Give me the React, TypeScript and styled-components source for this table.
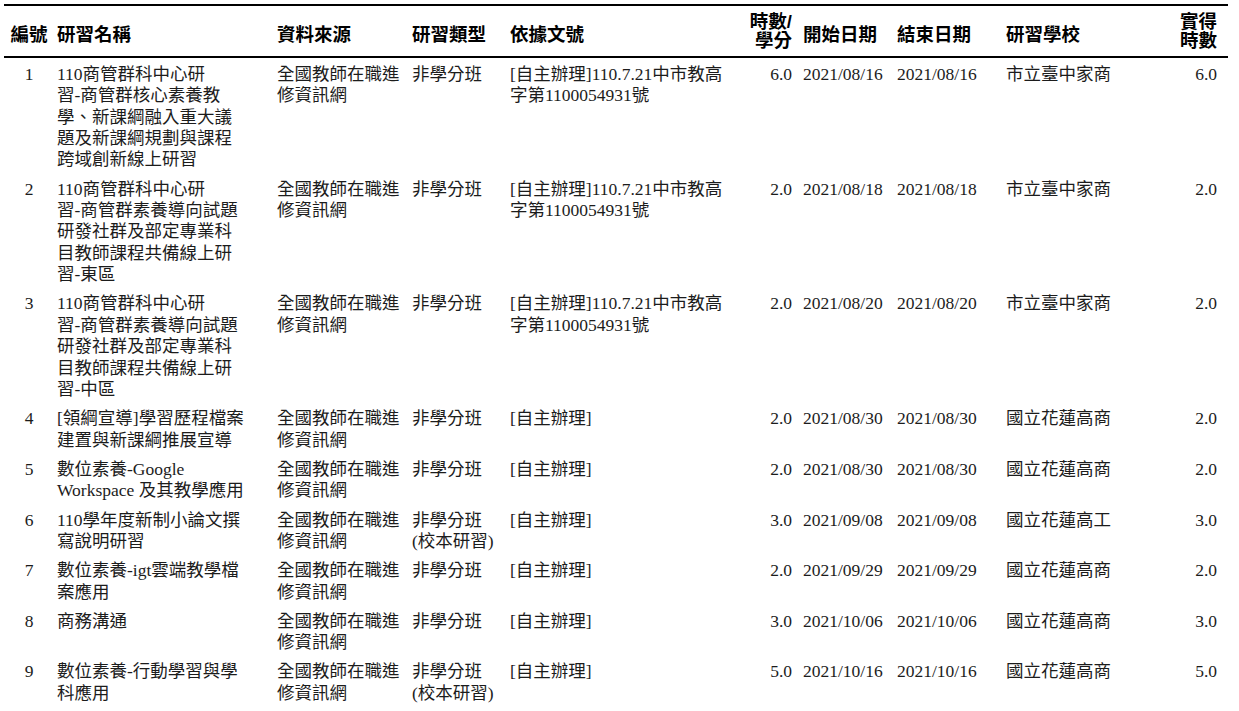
import React from "react";
import styled, { createGlobalStyle } from "styled-components";

const GlobalStyle = createGlobalStyle`
  html, body {
    margin: 0;
    padding: 0;
    background: #ffffff;
  }
  body {
    font-family: "Liberation Serif", "Noto Sans CJK TC", serif;
  }
`;

type Align = "left" | "center" | "right";

interface ColumnDef {
  key: string;
  title: string[];
  width: number;
  align: Align;
  padRight: number;
}

const columns: ColumnDef[] = [
  { key: "no", title: ["編號"], width: 53, align: "center", padRight: 3 },
  { key: "name", title: ["研習名稱"], width: 220, align: "left", padRight: 0 },
  { key: "source", title: ["資料來源"], width: 135, align: "left", padRight: 0 },
  { key: "type", title: ["研習類型"], width: 98, align: "left", padRight: 0 },
  { key: "ref", title: ["依據文號"], width: 230, align: "left", padRight: 0 },
  { key: "hours", title: ["時數/", "學分"], width: 63, align: "right", padRight: 11 },
  { key: "start", title: ["開始日期"], width: 94, align: "left", padRight: 0 },
  { key: "end", title: ["結束日期"], width: 109, align: "left", padRight: 0 },
  { key: "school", title: ["研習學校"], width: 144, align: "left", padRight: 0 },
  { key: "earned", title: ["實得", "時數"], width: 78, align: "right", padRight: 11 },
];

interface Record {
  no: string;
  name: string[];
  source: string[];
  type: string[];
  ref: string[];
  hours: string;
  start: string;
  end: string;
  school: string;
  earned: string;
}

const SOURCE = ["全國教師在職進", "修資訊網"];
const TYPE = ["非學分班"];
const TYPE_SCHOOL = ["非學分班", "(校本研習)"];
const REF_LONG = ["[自主辦理]110.7.21中市教高", "字第1100054931號"];
const REF_SHORT = ["[自主辦理]"];

const records: Record[] = [
  {
    no: "1",
    name: ["110商管群科中心研", "習-商管群核心素養教", "學、新課綱融入重大議", "題及新課綱規劃與課程", "跨域創新線上研習"],
    source: SOURCE,
    type: TYPE,
    ref: REF_LONG,
    hours: "6.0",
    start: "2021/08/16",
    end: "2021/08/16",
    school: "市立臺中家商",
    earned: "6.0",
  },
  {
    no: "2",
    name: ["110商管群科中心研", "習-商管群素養導向試題", "研發社群及部定專業科", "目教師課程共備線上研", "習-東區"],
    source: SOURCE,
    type: TYPE,
    ref: REF_LONG,
    hours: "2.0",
    start: "2021/08/18",
    end: "2021/08/18",
    school: "市立臺中家商",
    earned: "2.0",
  },
  {
    no: "3",
    name: ["110商管群科中心研", "習-商管群素養導向試題", "研發社群及部定專業科", "目教師課程共備線上研", "習-中區"],
    source: SOURCE,
    type: TYPE,
    ref: REF_LONG,
    hours: "2.0",
    start: "2021/08/20",
    end: "2021/08/20",
    school: "市立臺中家商",
    earned: "2.0",
  },
  {
    no: "4",
    name: ["[領綱宣導]學習歷程檔案", "建置與新課綱推展宣導"],
    source: SOURCE,
    type: TYPE,
    ref: REF_SHORT,
    hours: "2.0",
    start: "2021/08/30",
    end: "2021/08/30",
    school: "國立花蓮高商",
    earned: "2.0",
  },
  {
    no: "5",
    name: ["數位素養-Google", "Workspace 及其教學應用"],
    source: SOURCE,
    type: TYPE,
    ref: REF_SHORT,
    hours: "2.0",
    start: "2021/08/30",
    end: "2021/08/30",
    school: "國立花蓮高商",
    earned: "2.0",
  },
  {
    no: "6",
    name: ["110學年度新制小論文撰", "寫說明研習"],
    source: SOURCE,
    type: TYPE_SCHOOL,
    ref: REF_SHORT,
    hours: "3.0",
    start: "2021/09/08",
    end: "2021/09/08",
    school: "國立花蓮高工",
    earned: "3.0",
  },
  {
    no: "7",
    name: ["數位素養-igt雲端教學檔", "案應用"],
    source: SOURCE,
    type: TYPE,
    ref: REF_SHORT,
    hours: "2.0",
    start: "2021/09/29",
    end: "2021/09/29",
    school: "國立花蓮高商",
    earned: "2.0",
  },
  {
    no: "8",
    name: ["商務溝通"],
    source: SOURCE,
    type: TYPE,
    ref: REF_SHORT,
    hours: "3.0",
    start: "2021/10/06",
    end: "2021/10/06",
    school: "國立花蓮高商",
    earned: "3.0",
  },
  {
    no: "9",
    name: ["數位素養-行動學習與學", "科應用"],
    source: SOURCE,
    type: TYPE_SCHOOL,
    ref: REF_SHORT,
    hours: "5.0",
    start: "2021/10/16",
    end: "2021/10/16",
    school: "國立花蓮高商",
    earned: "5.0",
  },
];

const Page = styled.main`
  padding: 4px 0 0 4px;
`;

const Table = styled.table`
  width: 1224px;
  table-layout: fixed;
  border-collapse: separate;
  border-spacing: 0;
`;

const Col = styled.col<{ $w: number }>`
  width: ${(p) => p.$w}px;
`;

const HeadCell = styled.th<{ $align: Align; $pr: number; $stacked: boolean }>`
  font-family: "Liberation Sans", "Noto Sans CJK TC", sans-serif;
  font-weight: 700;
  font-size: 18.5px;
  line-height: 19px;
  color: #000;
  text-align: ${(p) => p.$align};
  vertical-align: top;
  white-space: nowrap;
  border-top: 2px solid #000;
  border-bottom: 2px solid #000;
  padding: ${(p) => (p.$stacked ? "5.5px" : "18.5px")} ${(p) => p.$pr}px
    ${(p) => (p.$stacked ? "6.5px" : "0")} 0;
`;

const BodyCell = styled.td<{ $align: Align; $pr: number }>`
  font-size: 17.5px;
  line-height: 21.4px;
  color: #1c1c1c;
  text-align: ${(p) => p.$align};
  vertical-align: top;
  white-space: nowrap;
  padding: 5.8px ${(p) => p.$pr}px 2px 0;
`;

const Line = styled.span`
  display: block;
`;

const Lines: React.FC<{ lines: string[] }> = ({ lines }) => (
  <>
    {lines.map((l, i) => (
      <Line key={i}>{l}</Line>
    ))}
  </>
);

function cellLines(r: Record, key: string): string[] {
  const v = (r as unknown as { [k: string]: string | string[] })[key];
  return Array.isArray(v) ? v : [v];
}

export default function App() {
  return (
    <Page>
      <GlobalStyle />
      <Table>
        <colgroup>
          {columns.map((c) => (
            <Col key={c.key} $w={c.width} />
          ))}
        </colgroup>
        <thead>
          <tr>
            {columns.map((c) => (
              <HeadCell
                key={c.key}
                $align={c.align}
                $pr={c.padRight}
                $stacked={c.title.length > 1}
              >
                <Lines lines={c.title} />
              </HeadCell>
            ))}
          </tr>
        </thead>
        <tbody>
          {records.map((r) => (
            <tr key={r.no}>
              {columns.map((c) => (
                <BodyCell key={c.key} $align={c.align} $pr={c.padRight}>
                  <Lines lines={cellLines(r, c.key)} />
                </BodyCell>
              ))}
            </tr>
          ))}
        </tbody>
      </Table>
    </Page>
  );
}
